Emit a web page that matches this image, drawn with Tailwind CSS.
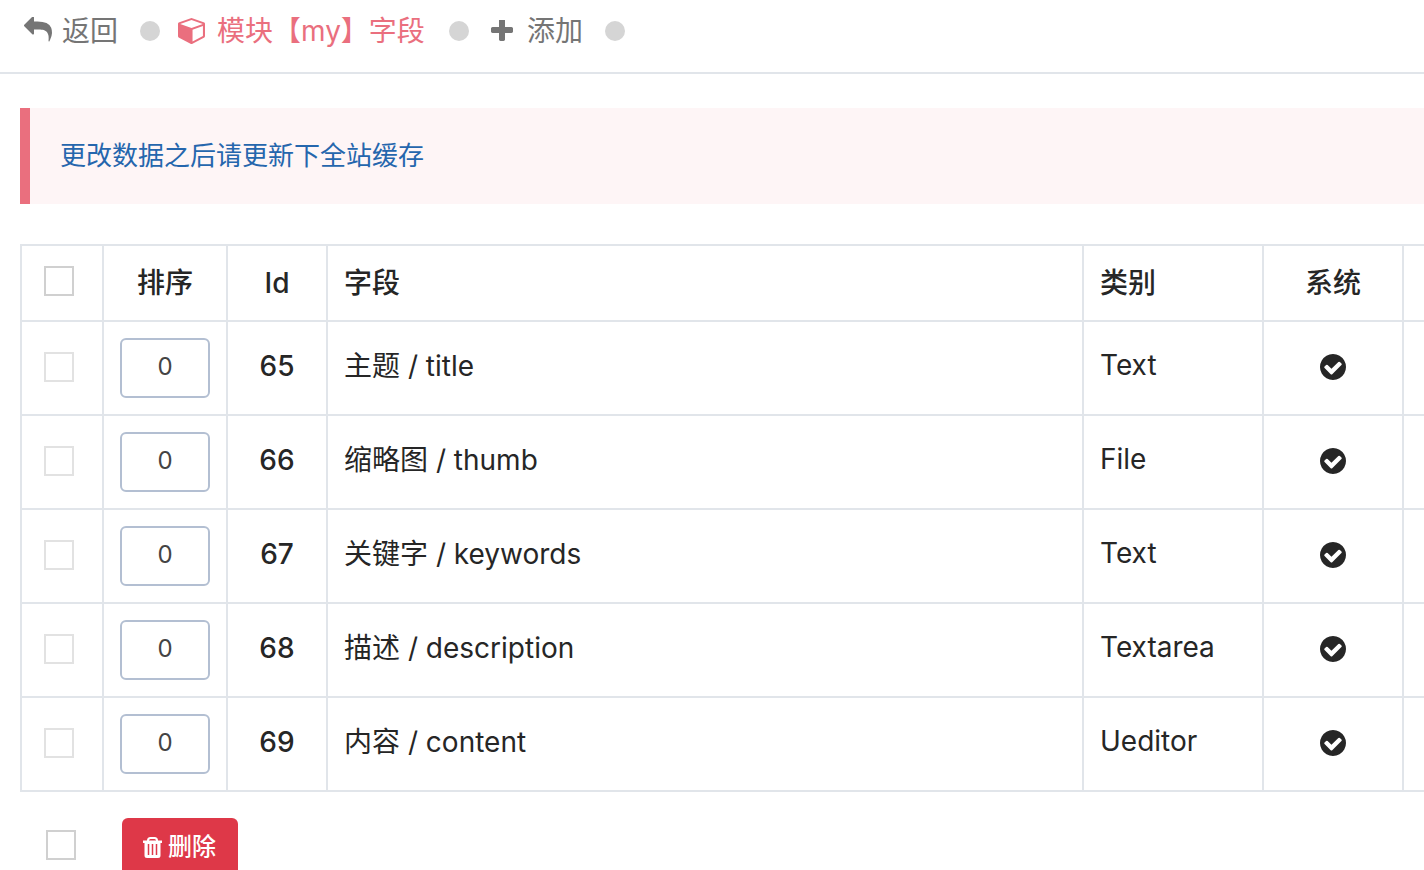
<!DOCTYPE html>
<html lang="zh-CN">
<head>
<meta charset="utf-8">
<meta name="viewport" content="width=device-width, initial-scale=1">
<title>模块【my】字段</title>
<script src="https://cdn.jsdelivr.net/npm/@tailwindcss/browser@4"></script>
</head>
<body class="overflow-hidden bg-white font-['Century_Gothic','Inter','Noto_Sans_CJK_SC',sans-serif] text-[28px] leading-10 text-[#262626]">
<svg class="hidden" aria-hidden="true">
  <symbol id="check" viewBox="128 128 1536 1536"><path d="M1412 734q0-28-18-46l-91-90q-19-19-45-19t-45 19l-408 407-226-226q-19-19-45-19t-45 19l-91 90q-18 18-18 46 0 27 18 45l362 362q19 19 45 19 27 0 46-19l543-543q18-18 18-45zm252 162q0 209-103 385.5t-279.5 279.5-385.5 103-385.5-103-279.5-279.5-103-385.5 103-385.5 279.5-279.5 385.5-103 385.5 103 279.5 279.5 103 385.5z"/></symbol>
</svg>
<nav class="flex h-[74px] items-start border-b-2 border-[#e1e5ea] pt-[11px] pl-6 whitespace-nowrap text-[#757575]">
  <a href="#" class="flex items-center gap-[10px]">
    <svg class="h-7 w-7 fill-current" viewBox="0 100 1792 1792" aria-hidden="true"><path d="M1792 1120q0 166-127 451-3 7-10.5 24t-13.5 30-13 22q-12 17-28 17-15 0-23.5-10t-8.5-25q0-9 2.5-26.5t2.5-23.5q5-68 5-123 0-101-17.5-181t-48.5-138.5-80-101-105.5-69.5-133-42.5-154-21.5-175.5-6h-224v256q0 26-19 45t-45 19-45-19l-512-512q-19-19-19-45t19-45l512-512q19-19 45-19t45 19 19 45v256h224q713 0 875 403 53 134 53 333z"/></svg>
    <span>返回</span>
  </a>
  <span class="mt-[10px] mr-[18px] ml-[22px] size-5 shrink-0 rounded-full bg-[#d5d5d5]"></span>
  <a href="#" class="flex items-center gap-3 text-[#ea6f7e]" aria-current="page">
    <svg class="h-[26px] w-[27px] fill-current" viewBox="0 128 1664 1664" preserveAspectRatio="none" aria-hidden="true"><path d="M896 1629l640-349v-636l-640 233v752zm-64-865l698-254-698-254-698 254zm832-252v768q0 35-18 65t-49 47l-704 384q-28 16-61 16t-61-16l-704-384q-31-17-49-47t-18-65v-768q0-40 23-73t61-47l704-256q22-8 44-8t44 8l704 256q38 14 61 47t23 73z"/></svg>
    <span>模块【my】字段</span>
  </a>
  <span class="mt-[10px] mr-[22px] ml-6 size-5 shrink-0 rounded-full bg-[#d5d5d5]"></span>
  <a href="#" class="flex items-center gap-[14px]">
    <svg class="size-[22px] fill-current" viewBox="192 192 1408 1408" aria-hidden="true"><path d="M1600 736v192q0 40-28 68t-68 28h-416v416q0 40-28 68t-68 28h-192q-40 0-68-28t-28-68v-416h-416q-40 0-68-28t-28-68v-192q0-40 28-68t68-28h416v-416q0-40 28-68t68-28h192q40 0 68 28t28 68v416h416q40 0 68 28t28 68z"/></svg>
    <span>添加</span>
  </a>
  <span class="mt-[10px] ml-[22px] size-5 shrink-0 rounded-full bg-[#d5d5d5]"></span>
</nav>
<main class="overflow-hidden pt-[34px] pl-5">
  <div role="note" class="border-l-[10px] border-[#ea6f7e] bg-[#fef5f6] px-[30px] py-7 text-[26px] text-[#2566ad]">更改数据之后请更新下全站缓存</div>
  <form>
    <table class="mt-10 w-[calc(100%+100px)] table-fixed border-collapse [&_td]:border-2 [&_td]:border-[#e1e5ea] [&_th]:border-2 [&_th]:border-[#e1e5ea]">
      <colgroup><col class="w-[82px]"><col class="w-[124px]"><col class="w-[100px]"><col><col class="w-[180px]"><col class="w-[140px]"><col class="w-[120px]"></colgroup>
      <thead>
        <tr class="h-[76px] [&>th]:font-medium">
          <th class="pr-[6px] pb-1"><input type="checkbox" aria-label="全选" class="mx-auto block size-[30px] appearance-none border-2 border-[#d0d0d0] checked:bg-[#d0d0d0]"></th>
          <th scope="col">排序</th><th scope="col">Id</th><th scope="col" class="pl-4 text-left">字段</th><th scope="col" class="pl-4 text-left">类别</th><th scope="col">系统</th><th></th>
        </tr>
      </thead>
      <tbody id="rows"></tbody>
    </table>
    <div class="mt-[26px] flex items-start">
      <input type="checkbox" aria-label="全选" class="mt-3 mr-[46px] ml-[26px] size-[30px] appearance-none border-2 border-[#d0d0d0] checked:bg-[#d0d0d0]">
      <button type="button" class="flex h-[60px] items-center gap-[6px] rounded-md bg-[#de3848] pr-[22px] pb-[2px] pl-[21px] text-[24px] font-medium text-white">
        <svg class="h-[21px] w-[19px]" viewBox="0 0 19 21" aria-hidden="true"><path fill="none" stroke="#fff" stroke-width="2" d="M5 4.500V3.500Q5 1 7.500 1h4Q14 1 14 3.500V4.500"/><path fill="#fff" d="M0 3.500h19v2.500H17.500V18.500Q17.500 21 15 21H4Q1.500 21 1.500 18.500V6H0z"/><path stroke="#de3848" stroke-width="1.500" d="M5.500 7v11M9.500 7v11M13.500 7v11"/></svg>
        <span>删除</span>
      </button>
    </div>
  </form>
</main>
<script>
const rows = [[65,'主题 / title','Text'],[66,'缩略图 / thumb','File'],[67,'关键字 / keywords','Text'],[68,'描述 / description','Textarea'],[69,'内容 / content','Ueditor']];
document.getElementById('rows').innerHTML = rows.map(([id,name,type]) => `
<tr class="h-[94px]">
  <td class="pr-[6px] pb-[2px]"><input type="checkbox" disabled aria-label="选择 ${id}" class="mx-auto block size-[30px] appearance-none border-2 border-[#e2e2e2]"></td>
  <td><input type="text" value="0" aria-label="排序 ${id}" class="mx-auto block h-[60px] w-[90px] rounded-md border-2 border-[#b3bfd2] pb-1 text-center text-[24px] text-[#444]"></td>
  <td class="pb-1 text-center font-medium">${id}</td>
  <td class="pb-1 pl-4">${name}</td>
  <td class="pb-[6px] pl-4">${type}</td>
  <td class="pb-[2px]"><svg class="mx-auto block size-[26px] fill-current" role="img" aria-label="是"><use href="#check"/></svg></td>
  <td></td>
</tr>`).join('');
</script>
</body>
</html>
